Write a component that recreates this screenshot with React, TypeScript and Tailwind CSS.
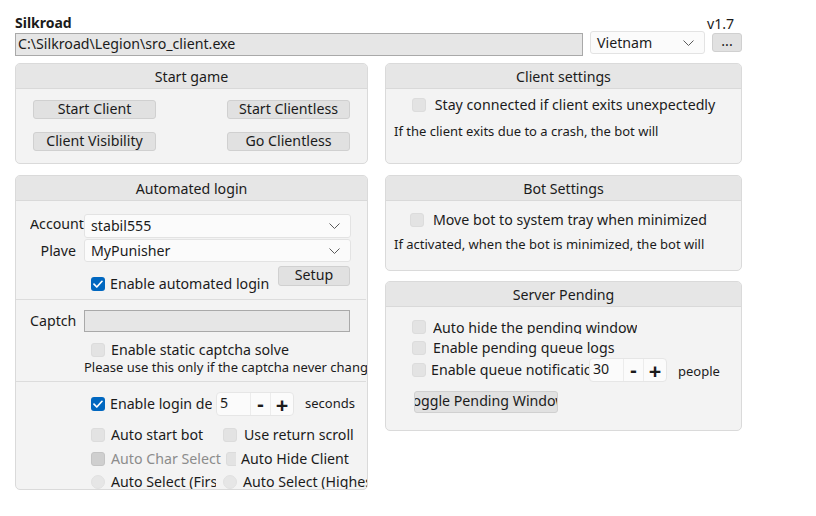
import type { ReactNode } from "react";

const font = { fontFamily: '"Noto Sans", "Open Sans", sans-serif' };

function Panel({
  title,
  className,
  children,
}: {
  title: string;
  className?: string;
  children: ReactNode;
}) {
  return (
    <div
      className={`overflow-hidden rounded-[5px] border border-[#dadada] bg-[#f3f3f3] ${className ?? ""}`}
    >
      <div className="h-[25px] border-b border-[#d9d9d9] bg-[#e6e6e6] text-center text-[14.2px] leading-[25px]">
        {title}
      </div>
      {children}
    </div>
  );
}

function Check({
  checked,
  dark,
  className,
}: {
  checked?: boolean;
  dark?: boolean;
  className?: string;
}) {
  if (checked) {
    return (
      <span
        className={`flex h-[14px] w-[14px] shrink-0 items-center justify-center rounded-[3px] bg-[#0067c0] ${className ?? ""}`}
      >
        <svg width="10" height="8" viewBox="0 0 10 8" fill="none">
          <path d="M1 4.2 3.8 7 9 1.3" stroke="#fff" strokeWidth="1.7" strokeLinecap="round" strokeLinejoin="round" />
        </svg>
      </span>
    );
  }
  return (
    <span
      className={`block h-[14px] w-[14px] shrink-0 rounded-[3px] border ${
        dark ? "border-[#c4c4c4] bg-[#cfcfcf]" : "border-[#dcdcdc] bg-[#e3e3e3]"
      } ${className ?? ""}`}
    />
  );
}

function Radio({ className }: { className?: string }) {
  return (
    <span
      className={`block h-[14px] w-[14px] shrink-0 rounded-full border border-[#e0e0e0] bg-[#e6e6e6] ${className ?? ""}`}
    />
  );
}

function Chevron() {
  return (
    <svg width="11" height="6" viewBox="0 0 11 6" fill="none" className="shrink-0">
      <path d="M0.5 0.5 5.5 5.5 10.5 0.5" stroke="#5a5a5a" strokeWidth="1" />
    </svg>
  );
}

function Combo({ value, className }: { value: string; className?: string }) {
  return (
    <div
      className={`flex items-center justify-between rounded-[3px] border border-[#e3e3e3] bg-[#fbfbfb] pl-[6px] pr-[10px] text-[14.2px] ${className ?? ""}`}
    >
      <span>{value}</span>
      <Chevron />
    </div>
  );
}

function Btn({ children, className }: { children: ReactNode; className?: string }) {
  return (
    <div
      className={`flex items-center justify-center overflow-hidden whitespace-nowrap rounded-[3px] border border-[#d0d0d0] bg-[#e1e1e1] text-[14.2px] leading-none ${className ?? ""}`}
    >
      {children}
    </div>
  );
}

function Spin({ value, className }: { value: string; className?: string }) {
  return (
    <div
      className={`flex h-[24px] w-[78px] shrink-0 rounded-[4px] border border-[#e6e6e6] bg-[#fbfbfb] text-[14.2px] ${className ?? ""}`}
    >
      <span className="w-[33px] pl-[3px] leading-[20px]">{value}</span>
      <span className="flex w-[20px] items-center justify-center border-l border-[#ececec] text-[20px] font-bold leading-none">
        -
      </span>
      <span className="flex flex-1 items-center justify-center border-l border-[#ececec] text-[22px] font-bold leading-none">
        +
      </span>
    </div>
  );
}

export default function App() {
  return (
    <div className="h-[516px] w-[816px] bg-white text-[#1b1b1b]" style={font}>
      <div className="flex items-end pl-[15px] pt-[12px]">
        <div className="w-[568px]">
          <div className="text-[14px] font-bold leading-[21px]">Silkroad</div>
          <div className="h-[23px] overflow-hidden border border-[#a9a9a9] bg-[#e6e6e6] pl-[2px] text-[14.2px] leading-[20px]">
            C:\Silkroad\Legion\sro_client.exe
          </div>
        </div>
        <Combo value="Vietnam" className="mb-[2px] ml-[7px] h-[23px] w-[115px]" />
        <div className="mb-[4px] ml-[2px] flex flex-col">
          <div className="text-[14.2px] leading-[19px]">v1.7</div>
          <Btn className="ml-[5px] h-[19px] w-[30px] items-end pb-[3px] text-[12px]">...</Btn>
        </div>
      </div>

      <div className="mt-[7px] flex gap-[17px] pl-[15px]">
        <div className="flex w-[353px] flex-col gap-[11px]">
          <Panel title="Start game" className="h-[101px]">
            <div className="grid grid-cols-[123px_123px] justify-between gap-y-[13px] px-[17px] pt-[11px]">
              <Btn className="h-[19px]">Start Client</Btn>
              <Btn className="h-[19px]">Start Clientless</Btn>
              <Btn className="h-[19px]">Client Visibility</Btn>
              <Btn className="h-[19px]">Go Clientless</Btn>
            </div>
          </Panel>

          <Panel title="Automated login" className="h-[315px]">
            <div className="w-[380px] whitespace-nowrap text-[14.2px]">
              <div className="mt-[13px] flex">
                <div className="ml-[14px] mt-[6px] h-[14px] w-[54px] overflow-hidden">
                  <div className="-mt-[6px] leading-[20px]">Account</div>
                </div>
                <Combo value="stabil555" className="h-[24px] w-[267px] pl-[6px]" />
              </div>
              <div className="mt-[1px] flex items-center">
                <div className="w-[68px] pr-[8px] text-right leading-[20px]">Plave</div>
                <Combo value="MyPunisher" className="h-[23px] w-[267px] pl-[6px]" />
              </div>
              <div className="mt-[4px] flex items-start">
                <div className="ml-[75px] mt-[11px] flex w-[187px] items-center gap-[5px]">
                  <Check checked />
                  <span className="leading-[14px]">Enable automated login</span>
                </div>
                <Btn className="h-[20px] w-[72px] pb-[2px]">Setup</Btn>
              </div>
              <div className="mt-[8px] h-px w-[350px] bg-[#dcdcdc]" />
              <div className="mt-[10px] flex items-center">
                <div className="ml-[14px] w-[54px] leading-[20px]">Captch</div>
                <div className="h-[22px] w-[266px] border border-[#a9a9a9] bg-[#e6e6e6]" />
              </div>
              <div className="ml-[75px] mt-[11px] flex items-center gap-[6px]">
                <Check />
                <span className="leading-[14px]">Enable static captcha solve</span>
              </div>
              <div className="ml-[68px] mt-[1px] text-[13px] leading-[18px]">
                Please use this only if the captcha never changes
              </div>
              <div className="mt-[5px] h-px w-[350px] bg-[#dcdcdc]" />
              <div className="mt-[10px] flex items-center">
                <div className="ml-[75px] flex w-[121px] items-center gap-[5px] overflow-hidden">
                  <Check checked />
                  <span className="leading-[20px]">Enable login delay</span>
                </div>
                <Spin value="5" className="ml-[4px]" />
                <span className="ml-[11px] text-[13px]">seconds</span>
              </div>
              <div className="mt-[11px] flex items-center">
                <div className="ml-[75px] flex w-[132px] items-center gap-[6px] overflow-hidden">
                  <Check />
                  <span className="leading-[16px]">Auto start bot</span>
                </div>
                <Check />
                <span className="ml-[7px] leading-[16px]">Use return scroll</span>
              </div>
              <div className="mt-[8px] flex items-center">
                <div className="ml-[75px] flex w-[131px] items-center gap-[6px] overflow-hidden">
                  <Check dark />
                  <span className="leading-[16px] text-[#8c8c8c]">Auto Char Select</span>
                </div>
                <div className="ml-[4px] w-[10px] overflow-hidden">
                  <Check />
                </div>
                <span className="ml-[5px] leading-[16px]">Auto Hide Client</span>
              </div>
              <div className="mt-[7px] flex items-center">
                <div className="ml-[75px] flex w-[125px] items-center gap-[6px] overflow-hidden">
                  <Radio />
                  <span className="leading-[16px]">Auto Select (First)</span>
                </div>
                <Radio className="ml-[7px]" />
                <span className="ml-[6px] leading-[16px]">Auto Select (Highest)</span>
              </div>
            </div>
          </Panel>
        </div>

        <div className="flex w-[357px] flex-col">
          <Panel title="Client settings" className="h-[101px]">
            <div className="mt-[8px] flex items-center justify-center gap-[9px] text-[14.2px]">
              <Check />
              <span className="leading-[16px]">Stay connected if client exits unexpectedly</span>
            </div>
            <div className="ml-[8px] mt-[9px] text-[13px] leading-[18px]">
              If the client exits due to a crash, the bot will
            </div>
          </Panel>

          <Panel title="Bot Settings" className="mt-[11px] h-[96px]">
            <div className="mt-[11px] flex items-center justify-center gap-[9px] pr-[10px] text-[14.2px]">
              <Check />
              <span className="leading-[16px]">Move bot to system tray when minimized</span>
            </div>
            <div className="ml-[8px] mt-[7px] text-[13px] leading-[18px]">
              If activated, when the bot is minimized, the bot will
            </div>
          </Panel>

          <Panel title="Server Pending" className="mt-[10px] h-[150px]">
            <div className="whitespace-nowrap pl-[26px] text-[14.2px]">
              <div className="mt-[13px] flex items-center gap-[7px]">
                <Check />
                <div className="h-[13px] overflow-hidden">
                  <div className="-mt-[3px] leading-[20px]">Auto hide the pending window</div>
                </div>
              </div>
              <div className="mt-[6px] flex items-center gap-[7px]">
                <Check />
                <span className="leading-[16px]">Enable pending queue logs</span>
              </div>
              <div className="mt-[2px] flex items-center">
                <div className="flex w-[179px] items-center gap-[5px] overflow-hidden">
                  <Check />
                  <span className="leading-[20px]">Enable queue notifications</span>
                </div>
                <Spin value="30" className="-ml-[2px]" />
                <span className="ml-[11px] mt-[4px] text-[13px]">people</span>
              </div>
              <Btn className="ml-[2px] mt-[9px] h-[22px] w-[144px] justify-center pb-[2px]">
                <span>Toggle Pending Window</span>
              </Btn>
            </div>
          </Panel>
        </div>
      </div>
    </div>
  );
}
